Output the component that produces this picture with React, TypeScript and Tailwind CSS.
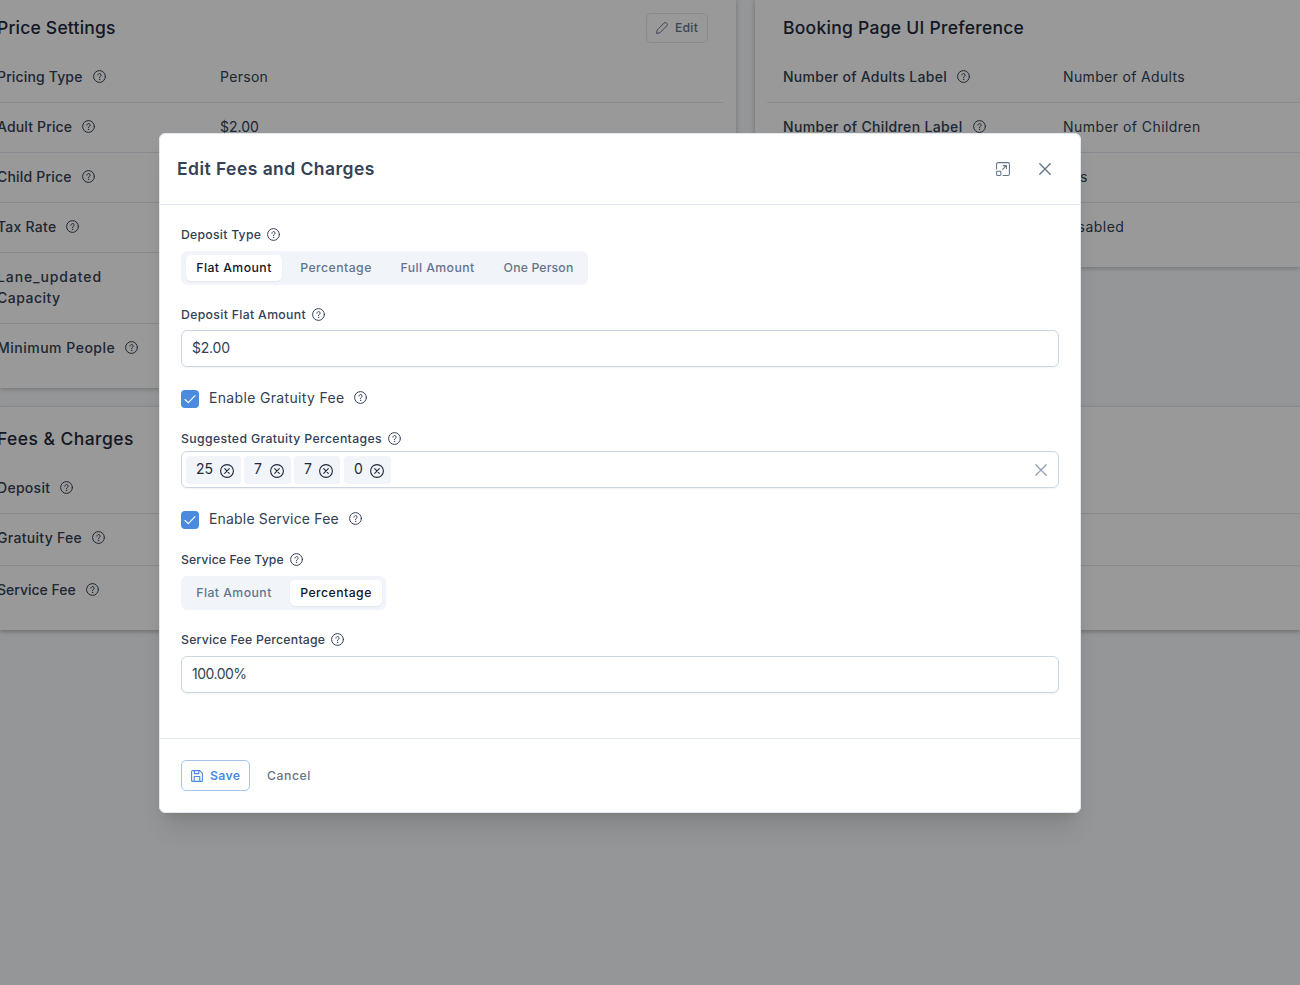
import type { ReactNode } from "react";
import clsx from "clsx";

interface IconProps {
  className?: string;
}

interface Row {
  label: ReactNode;
  value?: ReactNode;
  help?: boolean;
  tall?: boolean;
}

const priceRows: Row[] = [
  { label: <span className="tracking-[0.15px]">Pricing Type</span>, value: <span className="tracking-[0.3px]">Person</span>, help: true },
  { label: <span className="tracking-[0.15px]">Adult Price</span>, value: "$2.00", help: true },
  { label: <span className="tracking-[0.2px]">Child Price</span>, help: true },
  { label: <span className="tracking-[0.25px]">Tax Rate</span>, help: true },
  {
    label: (
      <span>
        <span className="tracking-[0.9px]">Lane_updated</span>
        <br />
        <span className="tracking-[0.5px]">Capacity</span>
      </span>
    ),
  },
  { label: <span className="tracking-[0.5px]">Minimum People</span>, help: true },
];

const bookingRows: Row[] = [
  {
    label: <span className="tracking-[0.28px]">Number of Adults Label</span>,
    value: <span className="tracking-[0.35px]">Number of Adults</span>,
    help: true,
  },
  {
    label: <span className="tracking-[0.35px]">Number of Children Label</span>,
    value: <span className="tracking-[0.43px]">Number of Children</span>,
    help: true,
  },
  { label: "", value: <span className="tracking-[0.2px]">Yes</span> },
  { label: "", value: <span className="tracking-[0.5px]">Disabled</span> },
];

const feeRows: Row[] = [
  { label: <span className="tracking-[0.28px]">Deposit</span>, help: true },
  { label: <span className="tracking-[0.3px]">Gratuity Fee</span>, help: true, tall: true },
  { label: "Service Fee", help: true },
];

function HelpIcon({ className }: IconProps) {
  return (
    <svg className={clsx("size-[13px] shrink-0", className)} viewBox="0 0 13 13" fill="none" stroke="currentColor" strokeLinecap="round" strokeLinejoin="round">
      <circle cx="6.5" cy="6.5" r="5.9" strokeWidth="1" />
      <path d="M4.9 5.1a1.6 1.6 0 1 1 2.5 1.35c-.6.35-.9.6-.9 1.1" strokeWidth="1" />
      <circle cx="6.5" cy="9.35" r=".25" strokeWidth=".8" />
    </svg>
  );
}

function PencilIcon() {
  return (
    <svg className="size-3" viewBox="0 0 12 12" fill="none" stroke="currentColor" strokeWidth="1" strokeLinejoin="round">
      <path d="M.6 11.4l.5-3.3L8 1.15a1.75 1.75 0 0 1 2.6 0l.2.2a1.75 1.75 0 0 1 0 2.5L3.9 10.8z" />
    </svg>
  );
}

function SaveIcon() {
  return (
    <svg className="size-3" viewBox="0 0 12 12" fill="none" stroke="currentColor" strokeWidth="1.1" strokeLinejoin="round">
      <path d="M1.6.6h7.1l2.7 2.7v7.1a1 1 0 0 1-1 1H1.6a1 1 0 0 1-1-1V1.6a1 1 0 0 1 1-1z" />
      <path d="M3.4.8v2.8h4.4V.8M3.2 11.2V6.5h5.6v4.7" />
    </svg>
  );
}

function ExpandIcon() {
  return (
    <svg className="size-3.5" viewBox="0 0 14 14" fill="none" stroke="currentColor" strokeWidth="1.05" strokeLinecap="round" strokeLinejoin="round">
      <path d="M.6 7V2A1.4 1.4 0 0 1 2 .6h10A1.4 1.4 0 0 1 13.4 2v10a1.4 1.4 0 0 1-1.4 1.4H7" />
      <rect x=".6" y="9.2" width="4.2" height="4.2" rx=".8" />
      <path d="M6.6 7.4l3.7-3.7M7.2 3.6h3.2v3.2" />
    </svg>
  );
}

function CloseIcon({ className }: IconProps) {
  return (
    <svg className={className} viewBox="0 0 12 12" fill="none" stroke="currentColor" strokeWidth="1.35" strokeLinecap="round">
      <path d="M.8.8l10.4 10.4M11.2.8L.8 11.2" />
    </svg>
  );
}

function RemoveIcon() {
  return (
    <svg className="size-3.5" viewBox="0 0 14 14" fill="none" stroke="currentColor" strokeWidth="1.1" strokeLinecap="round">
      <circle cx="7" cy="7" r="6.4" />
      <path d="M4.7 4.7l4.6 4.6M9.3 4.7L4.7 9.3" />
    </svg>
  );
}

function Rows({ rows, labelClass, rowClass }: { rows: Row[]; labelClass: string; rowClass: string }) {
  return (
    <div>
      {rows.map((row, i) => (
        <div
          key={i}
          className={clsx(
            "flex border-[#e2e8f0]",
            rowClass,
            i < rows.length - 1 && "border-b",
            row.tall ? "pb-[17px] pt-[13px]" : "pb-[15px] pt-[13px]"
          )}
        >
          <div className={clsx("flex min-h-[21px] items-start font-medium", labelClass)}>
            {row.label}
            {row.help && <HelpIcon className="ml-2.5 mt-1" />}
          </div>
          <div>{row.value}</div>
        </div>
      ))}
    </div>
  );
}

function FieldLabel({ children }: { children: ReactNode }) {
  return (
    <div className="flex h-[19px] items-center text-[12.25px] font-medium text-[#334155]">
      {children}
      <HelpIcon className="-mt-px ml-1.5" />
    </div>
  );
}

function Segment({ active, className, children }: { active?: boolean; className: string; children: ReactNode }) {
  return (
    <button
      className={clsx(
        "h-[26px] whitespace-nowrap rounded-[5px] pb-0.5 text-[12.25px] font-medium",
        className,
        active ? "bg-white text-[#0f172a] shadow-[0_1px_2px_rgba(0,0,0,0.06)]" : "text-[#64748b]"
      )}
    >
      {children}
    </button>
  );
}

function Checkbox({ children }: { children: ReactNode }) {
  return (
    <div className="flex h-[18px] items-center">
      <span className="mr-2.5 flex size-[18px] items-center justify-center rounded-[4px] bg-[#4a8be0] text-white">
        <svg className="size-3" viewBox="0 0 12 12" fill="none" stroke="currentColor" strokeWidth="1.1" strokeLinecap="round" strokeLinejoin="round">
          <path d="M1 6.5l3.3 3.2L11 2.6" />
        </svg>
      </span>
      <span className="-mt-[3px] flex items-center">
        {children}
        <HelpIcon className="ml-2.5" />
      </span>
    </div>
  );
}

function Chip({ value, className }: { value: string; className: string }) {
  return (
    <div className={clsx("flex h-7 items-center justify-between rounded-[4px] bg-[#f1f5f9] pl-2.5 pr-[7px] text-[#1e293b]", className)}>
      <span className="-mt-0.5">{value}</span>
      <span className="mt-0.5">
        <RemoveIcon />
      </span>
    </div>
  );
}

function EditFeesDialog() {
  return (
    <div className="h-[680px] w-[922px] rounded-md border border-[#e2e8f0] bg-white shadow-[0_20px_25px_-5px_rgba(0,0,0,0.1),0_8px_10px_-6px_rgba(0,0,0,0.1)]">
      <div className="flex h-[71px] items-center justify-between border-b border-[#e2e8f0] pl-[17px] pr-[29px]">
        <h2 className="-mt-0.5 text-[17.5px] font-semibold tracking-[0.45px] text-[#334155]">Edit Fees and Charges</h2>
        <div className="flex items-center gap-[29px] text-[#64748b]">
          <ExpandIcon />
          <CloseIcon className="size-3" />
        </div>
      </div>

      <div className="h-[534px] border-b border-[#e2e8f0] px-[21px] pt-5">
        <FieldLabel><span className="tracking-[0.25px]">Deposit Type</span></FieldLabel>
        <div className="mt-[7px] flex h-[34px] w-[407px] items-center gap-2 rounded-md bg-[#f1f5f9] pl-[5px]">
          <Segment active className="w-24 tracking-[0.45px]">Flat Amount</Segment>
          <Segment className="w-23 tracking-[0.45px]">Percentage</Segment>
          <Segment className="w-[95px] tracking-[0.43px]">Full Amount</Segment>
          <Segment className="w-[91px] tracking-[0.15px]">One Person</Segment>
        </div>

        <div className="mt-5">
          <FieldLabel><span className="tracking-[0.33px]">Deposit Flat Amount</span></FieldLabel>
          <div className="mt-1.5 flex h-[37px] items-center rounded-md border border-[#cbd5e1] px-2.5 shadow-[0_1px_2px_rgba(18,18,23,0.05)]">
            <span className="-mt-0.5 tracking-[-0.2px]">$2.00</span>
          </div>
        </div>

        <div className="mt-[23px]">
          <Checkbox><span className="tracking-[0.33px]">Enable Gratuity Fee</span></Checkbox>
        </div>

        <div className="mt-[21px]">
          <FieldLabel><span className="tracking-[0.36px]">Suggested Gratuity Percentages</span></FieldLabel>
          <div className="mt-[3px] flex h-[37px] items-center rounded-md border border-[#cbd5e1] pl-1 pr-[11px] shadow-[0_1px_2px_rgba(18,18,23,0.05)]">
            <div className="flex flex-1 gap-[3px]">
              <Chip value="25" className="w-[55px]" />
              <Chip value="7" className="w-[47px]" />
              <Chip value="7" className="w-[46px]" />
              <Chip value="0" className="ml-px w-[47px]" />
            </div>
            <CloseIcon className="size-3 text-[#94a3b8]" />
          </div>
        </div>

        <div className="mt-[23px]">
          <Checkbox><span className="tracking-[0.18px]">Enable Service Fee</span></Checkbox>
        </div>

        <div className="mt-[21px]">
          <FieldLabel><span className="tracking-[0.1px]">Service Fee Type</span></FieldLabel>
          <div className="mt-[7px] flex h-[34px] w-[205px] items-center gap-2 rounded-md bg-[#f1f5f9] pl-[5px]">
            <Segment className="w-24 tracking-[0.45px]">Flat Amount</Segment>
            <Segment active className="w-23 tracking-[0.45px]">Percentage</Segment>
          </div>
        </div>

        <div className="mt-5">
          <FieldLabel><span className="tracking-[0.23px]">Service Fee Percentage</span></FieldLabel>
          <div className="mt-[7px] flex h-[37px] items-center rounded-md border border-[#cbd5e1] px-2.5 shadow-[0_1px_2px_rgba(18,18,23,0.05)]">
            <span className="-mt-0.5 tracking-[-0.5px]">100.00%</span>
          </div>
        </div>
      </div>

      <div className="flex items-center px-[21px] pt-[21px] text-[12.25px] font-medium">
        <button className="flex h-[31px] w-[69px] items-center gap-[7px] rounded-[5px] border border-[#a5c5f0] pl-[9px] font-semibold tracking-[0.3px] text-[#4a8be0]">
          <SaveIcon />
          Save
        </button>
        <button className="ml-[17px] tracking-[0.55px] text-[#64748b]">Cancel</button>
      </div>
    </div>
  );
}

export default function App() {
  return (
    <div className="relative h-[985px] w-[1300px] overflow-hidden bg-[#f8fafc] font-['Inter',sans-serif] text-[14px] leading-[21px] text-[#334155]">
      <div className="flex items-start gap-[19px]">
        <section className="h-[388px] w-[736px] shrink-0 bg-white pr-3 shadow-[0_1px_5px_rgba(0,0,0,0.25)]">
          <div className="flex h-[53px] items-start justify-between pr-4 pt-[13px]">
            <h3 className="-ml-[3px] mt-[4px] text-[17.5px] font-medium tracking-[0.2px] text-[#1e293b]">Price Settings</h3>
            <button className="flex h-[30px] w-[62px] items-center gap-[7px] rounded-[5px] border border-[#e2e8f0] pl-[9px] text-[12.25px] font-medium tracking-[0.2px] text-[#64748b]">
              <PencilIcon />
              <span className="-mt-0.5">Edit</span>
            </button>
          </div>
          <Rows rows={priceRows} rowClass="" labelClass="-ml-[3px] w-[223px]" />
        </section>

        <section className="h-[267px] w-[545px] shrink-0 bg-white pl-3 shadow-[0_1px_5px_rgba(0,0,0,0.25)]">
          <div className="h-[53px] pl-4 pt-[17px]">
            <h3 className="text-[17.5px] font-medium tracking-[0.27px] text-[#1e293b]">Booking Page UI Preference</h3>
          </div>
          <Rows rows={bookingRows} rowClass="pl-4" labelClass="w-[280px]" />
        </section>
      </div>

      <section className="mt-[18px] h-[224px] border-t border-[#e2e8f0] bg-white shadow-[0_2px_4px_rgba(0,0,0,0.25)]">
        <div className="h-[57px] pt-[21px]">
          <h3 className="-ml-[3px] text-[17.5px] font-medium tracking-[0.43px] text-[#1e293b]">Fees &amp; Charges</h3>
        </div>
        <Rows rows={feeRows} rowClass="" labelClass="-ml-[3px] w-[223px]" />
      </section>

      <div className="absolute inset-0 flex justify-center bg-black/40 pt-[133px]">
        <div className="-ml-[60px]">
          <EditFeesDialog />
        </div>
      </div>
    </div>
  );
}
